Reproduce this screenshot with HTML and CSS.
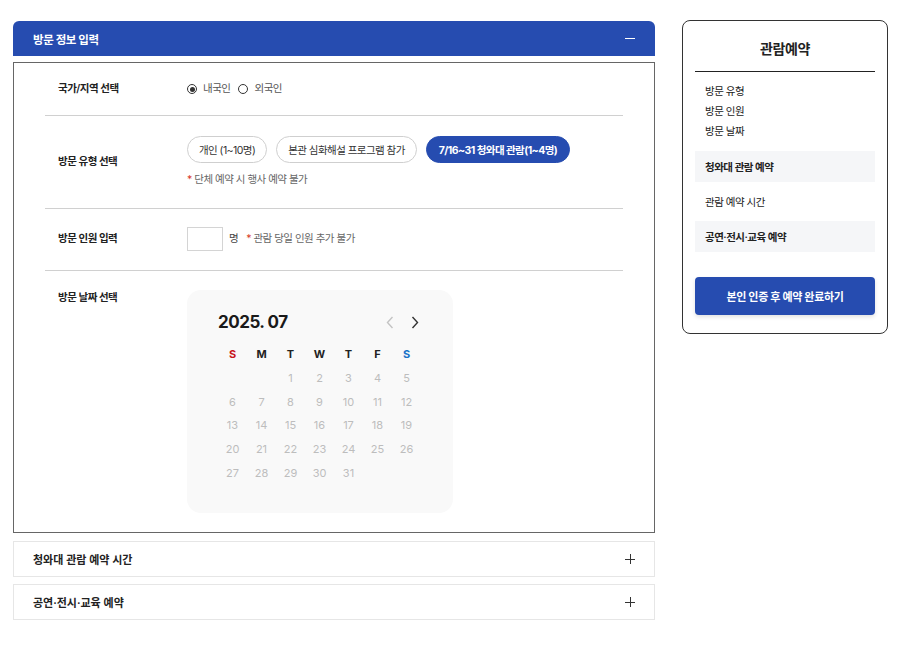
FILE: index.html
```html
<!DOCTYPE html>
<html lang="ko">
<head>
    <meta charset="UTF-8">
    <meta name="viewport" content="width=device-width, initial-scale=1.0">
    <title>관람예약</title>
    <link rel="stylesheet" href="styles.css">
</head>
<body>
    <div class="page">
        <div class="main">
            <div class="panel-head">
                <span>방문 정보 입력</span>
                <span class="minus"></span>
            </div>
            <div class="panel-body">
                <div class="row row-country">
                    <div class="row-label">국가/지역 선택</div>
                    <div class="row-value radios">
                        <label class="radio checked"><span class="dot"></span>내국인</label>
                        <label class="radio"><span class="dot"></span>외국인</label>
                    </div>
                </div>
                <div class="row row-type">
                    <div class="row-label">방문 유형 선택</div>
                    <div class="row-value">
                        <div class="chips">
                            <button class="chip">개인 (1~10명)</button>
                            <button class="chip">본관 심화해설 프로그램 참가</button>
                            <button class="chip active">7/16~31 청와대 관람(1~4명)</button>
                        </div>
                        <p class="note"><span class="star">*</span> 단체 예약 시 행사 예약 불가</p>
                    </div>
                </div>
                <div class="row row-count">
                    <div class="row-label">방문 인원 입력</div>
                    <div class="row-value inline">
                        <input type="text" class="count-input">
                        <span class="unit">명</span>
                        <span class="note"><span class="star">*</span> 관람 당일 인원 추가 불가</span>
                    </div>
                </div>
                <div class="row row-date">
                    <div class="row-label">방문 날짜 선택</div>
                    <div class="row-value">
                        <div class="calendar">
                            <div class="cal-head">
                                <span class="cal-title">2025. 07</span>
                                <span class="cal-nav">
                                    <svg width="8" height="13" viewBox="0 0 8 13"><path d="M6.5 1 1.5 6.5 6.5 12" fill="none" stroke="#c4c4c4" stroke-width="1.4"/></svg>
                                    <svg width="8" height="13" viewBox="0 0 8 13"><path d="M1.5 1 6.5 6.5 1.5 12" fill="none" stroke="#333" stroke-width="1.4"/></svg>
                                </span>
                            </div>
                            <div class="cal-grid">
                                <span class="wd sun">S</span><span class="wd">M</span><span class="wd">T</span><span class="wd">W</span><span class="wd">T</span><span class="wd">F</span><span class="wd sat">S</span>
                                <span></span><span></span><span>1</span><span>2</span><span>3</span><span>4</span><span>5</span>
                                <span>6</span><span>7</span><span>8</span><span>9</span><span>10</span><span>11</span><span>12</span>
                                <span>13</span><span>14</span><span>15</span><span>16</span><span>17</span><span>18</span><span>19</span>
                                <span>20</span><span>21</span><span>22</span><span>23</span><span>24</span><span>25</span><span>26</span>
                                <span>27</span><span>28</span><span>29</span><span>30</span><span>31</span>
                            </div>
                        </div>
                    </div>
                </div>
            </div>
            <div class="acc-item">
                <span>청와대 관람 예약 시간</span>
                <span class="plus"></span>
            </div>
            <div class="acc-item">
                <span>공연·전시·교육 예약</span>
                <span class="plus"></span>
            </div>
        </div>

        <div class="side">
            <h2 class="side-title">관람예약</h2>
            <ul class="side-list">
                <li>방문 유형</li>
                <li>방문 인원</li>
                <li>방문 날짜</li>
            </ul>
            <div class="side-item gray">청와대 관람 예약</div>
            <div class="side-item">관람 예약 시간</div>
            <div class="side-item gray">공연·전시·교육 예약</div>
            <button class="side-btn">본인 인증 후 예약 완료하기</button>
        </div>
    </div>
</body>
</html>
```

FILE: styles.css
```css
body {
    margin: 0;
    font-family: Inter, "Noto Sans CJK KR", sans-serif;
    color: #222;
    background: #fff;
}
.page {
    display: flex;
    align-items: flex-start;
    padding: 20px 0 0 13px;
    gap: 27px;
}
.main {
    width: 642px;
    margin-top: 1px;
}
.panel-head {
    height: 35px;
    box-sizing: border-box;
    background-color: #264cb0;
    border-radius: 6px 6px 0 0;
    color: #fff;
    font-size: 11.5px;
    letter-spacing: -0.4px;
    font-weight: 700;
    display: flex;
    align-items: center;
    justify-content: space-between;
    padding: 0 20px;
}
.minus {
    width: 10px;
    height: 1.5px;
    background: #fff;
}
.panel-body {
    margin-top: 6px;
    border: 1px solid #666;
    padding: 0 31px;
}
.row {
    display: flex;
    align-items: center;
    border-bottom: 1px solid #d0d0d0;
}
.row:last-child {
    border-bottom: none;
}
.row-label {
    width: 142px;
    box-sizing: border-box;
    padding-left: 13px;
    font-size: 10.5px;
    letter-spacing: -0.5px;
    font-weight: 600;
    line-height: 16px;
    flex-shrink: 0;
}
.row-value {
    font-size: 10.5px;
    letter-spacing: -0.5px;
    line-height: 16px;
}
.row-country {
    height: 52px;
}
.radios {
    display: flex;
    gap: 8px;
    color: #555;
}
.radio {
    display: flex;
    align-items: center;
    gap: 6px;
}
.dot {
    width: 8px;
    height: 8px;
    border: 1px solid #333;
    border-radius: 50%;
    position: relative;
}
.radio.checked .dot::after {
    content: "";
    position: absolute;
    left: 1.5px;
    top: 1.5px;
    width: 5px;
    height: 5px;
    border-radius: 50%;
    background: #333;
}
.row-type {
    padding: 20px 0;
}
.chips {
    display: flex;
    gap: 9px;
}
.chip {
    height: 27px;
    padding: 0 11px;
    border: 1px solid #cfcfcf;
    border-radius: 14px;
    background: #fff;
    font-family: inherit;
    font-size: 10.5px;
    letter-spacing: -0.55px;
    color: #333;
}
.chip.active {
    background: #264cb0;
    border-color: #264cb0;
    color: #fff;
    font-weight: 700;
    padding: 0 12px;
}
.note {
    margin: 9px 0 0;
    color: #666;
}
.star {
    color: #d83a2a;
}
.row-count {
    padding: 18px 0 19px;
}
.inline {
    display: flex;
    align-items: center;
}
.count-input {
    width: 36px;
    height: 24px;
    box-sizing: border-box;
    border: 1px solid #d4d4d4;
    margin: 0;
}
.unit {
    margin: 0 8px 0 6px;
    color: #444;
}
.inline .note {
    margin: 0;
}
.row-date {
    align-items: flex-start;
    padding: 19px 0 19px;
}
.calendar {
    width: 266px;
    height: 223px;
    box-sizing: border-box;
    background: #f9f9f9;
    border-radius: 14px;
    padding: 20px 31px 0 31px;
    letter-spacing: 0;
}
.cal-head {
    display: flex;
    justify-content: space-between;
    align-items: center;
    height: 24px;
    margin-bottom: 8px;
}
.cal-title {
    font-size: 17px;
    font-weight: 700;
    color: #1a1a1a;
    letter-spacing: -0.5px;
}
.cal-nav {
    display: flex;
    gap: 17px;
    margin-right: 3px;
}
.cal-grid {
    display: grid;
    grid-template-columns: repeat(7, 29px);
    grid-auto-rows: 23.8px;
    text-align: center;
    font-size: 11px;
    color: #bdbdbd;
    line-height: 24px;
}
.cal-grid .wd {
    font-weight: 700;
    color: #222;
}
.cal-grid .sun {
    color: #c8161d;
}
.cal-grid .sat {
    color: #1a73c8;
}
.acc-item {
    margin-top: 8px;
    height: 36px;
    box-sizing: border-box;
    border: 1px solid #e6e6e6;
    display: flex;
    align-items: center;
    justify-content: space-between;
    padding: 0 19px 0 19px;
    font-size: 11px;
    font-weight: 600;
}
.acc-item + .acc-item {
    margin-top: 7px;
}
.plus {
    width: 10px;
    height: 10px;
    position: relative;
}
.plus::before,
.plus::after {
    content: "";
    position: absolute;
    background: #333;
}
.plus::before {
    left: 0;
    top: 4.5px;
    width: 10px;
    height: 1px;
}
.plus::after {
    left: 4.5px;
    top: 0;
    width: 1px;
    height: 10px;
}
.side {
    width: 206px;
    height: 314px;
    box-sizing: border-box;
    border: 1px solid #333;
    border-radius: 8px;
    padding: 18px 12px 0;
}
.side-title {
    margin: 0;
    text-align: center;
    font-size: 14px;
    line-height: 20px;
    font-weight: 700;
    letter-spacing: -0.4px;
    padding-bottom: 12px;
    border-bottom: 1.5px solid #222;
}
.side-list {
    list-style: none;
    margin: 10px 0 0;
    padding: 0 10px;
    font-size: 10.5px;
    letter-spacing: -0.5px;
    line-height: 20px;
}
.side-item {
    height: 31px;
    margin-top: 4px;
    padding: 0 10px;
    display: flex;
    align-items: center;
    font-size: 10.5px;
    letter-spacing: -0.5px;
}
.side-item.gray {
    background: #f5f6f8;
    font-weight: 600;
}
.side-list + .side-item {
    margin-top: 9px;
}
.side-btn {
    margin-top: 25px;
    width: 100%;
    height: 38px;
    border: none;
    border-radius: 4px;
    background: #264cb0;
    color: #fff;
    font-family: inherit;
    font-size: 11px;
    letter-spacing: -0.3px;
    font-weight: 700;
    box-shadow: 0 2px 4px rgba(0,0,0,0.12);
}
```
